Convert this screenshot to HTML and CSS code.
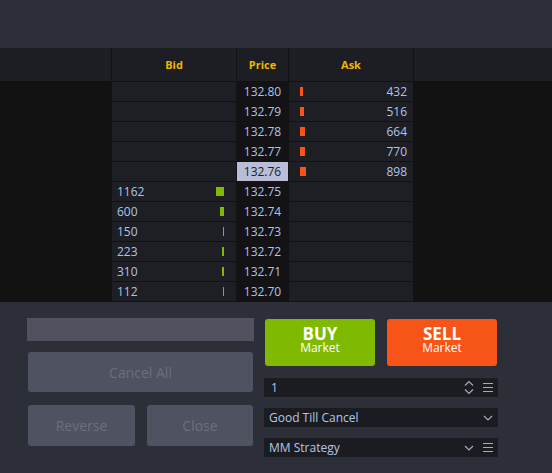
FILE: index.html
```html
<!DOCTYPE html>
<html>
<head>
<meta charset="utf-8">
<link rel="stylesheet" href="styles.css">
</head>
<body>
<div class="top"></div>
<div class="book">
  <div class="row head">
    <div class="side"></div>
    <div class="hcell">Bid</div>
    <div class="hcell">Price</div>
    <div class="hcell">Ask</div>
    <div class="side"></div>
  </div>
  <div class="row"><div class="side"></div><div class="bid"></div><div class="price">132.80</div><div class="ask"><span class="abar" style="width:3px"></span><span>432</span></div><div class="side"></div></div>
  <div class="row"><div class="side"></div><div class="bid"></div><div class="price">132.79</div><div class="ask"><span class="abar" style="width:4px"></span><span>516</span></div><div class="side"></div></div>
  <div class="row"><div class="side"></div><div class="bid"></div><div class="price">132.78</div><div class="ask"><span class="abar" style="width:5px"></span><span>664</span></div><div class="side"></div></div>
  <div class="row"><div class="side"></div><div class="bid"></div><div class="price">132.77</div><div class="ask"><span class="abar" style="width:5px"></span><span>770</span></div><div class="side"></div></div>
  <div class="row"><div class="side"></div><div class="bid"></div><div class="price last">132.76</div><div class="ask"><span class="abar" style="width:6px"></span><span>898</span></div><div class="side"></div></div>
  <div class="row"><div class="side"></div><div class="bid"><span>1162</span><span class="bbar" style="width:8px"></span></div><div class="price">132.75</div><div class="ask"></div><div class="side"></div></div>
  <div class="row"><div class="side"></div><div class="bid"><span>600</span><span class="bbar" style="width:4px"></span></div><div class="price">132.74</div><div class="ask"></div><div class="side"></div></div>
  <div class="row"><div class="side"></div><div class="bid"><span>150</span><span class="bbar" style="width:1px"></span></div><div class="price">132.73</div><div class="ask"></div><div class="side"></div></div>
  <div class="row"><div class="side"></div><div class="bid"><span>223</span><span class="bbar" style="width:2px"></span></div><div class="price">132.72</div><div class="ask"></div><div class="side"></div></div>
  <div class="row"><div class="side"></div><div class="bid"><span>310</span><span class="bbar" style="width:2px"></span></div><div class="price">132.71</div><div class="ask"></div><div class="side"></div></div>
  <div class="row"><div class="side"></div><div class="bid"><span>112</span><span class="bbar" style="width:1px"></span></div><div class="price">132.70</div><div class="ask"></div><div class="side"></div></div>
</div>
<div class="panel">
  <div class="left">
    <div class="field"></div>
    <div class="btn wide">Cancel All</div>
    <div class="pair">
      <div class="btn half">Reverse</div>
      <div class="btn half">Close</div>
    </div>
  </div>
  <div class="right">
    <div class="trade">
      <div class="tbtn buy"><span class="big">BUY</span><span class="small">Market</span></div>
      <div class="tbtn sell"><span class="big">SELL</span><span class="small">Market</span></div>
    </div>
    <div class="inp">
      <span class="val qty">1</span>
      <svg class="ic" width="10" height="15" viewBox="0 0 10 15"><path d="M1 5.5 L5 1.5 L9 5.5 M1 9.5 L5 13.5 L9 9.5" fill="none" stroke="#a3abc2" stroke-width="1.2"/></svg>
      <svg class="ic" width="10" height="11" viewBox="0 0 10 11"><path d="M0 1.5 H10 M0 5.5 H10 M0 9.5 H10" fill="none" stroke="#a3abc2" stroke-width="1.2"/></svg>
    </div>
    <div class="inp">
      <span class="val">Good Till Cancel</span>
      <svg class="ic" width="10" height="6" viewBox="0 0 10 6"><path d="M1 1 L5 5 L9 1" fill="none" stroke="#a3abc2" stroke-width="1.2"/></svg>
    </div>
    <div class="inp">
      <span class="val">MM Strategy</span>
      <svg class="ic" width="10" height="6" viewBox="0 0 10 6"><path d="M1 1 L5 5 L9 1" fill="none" stroke="#a3abc2" stroke-width="1.2"/></svg>
      <svg class="ic" width="10" height="11" viewBox="0 0 10 11"><path d="M0 1.5 H10 M0 5.5 H10 M0 9.5 H10" fill="none" stroke="#a3abc2" stroke-width="1.2"/></svg>
    </div>
  </div>
</div>
</body>
</html>
```
FILE: styles.css
```css
* { box-sizing: border-box; }
html, body {
  margin: 0;
  padding: 0;
  background: #2c2f38;
  font-family: "Open Sans", "DejaVu Sans", sans-serif;
  width: 552px;
  height: 473px;
  overflow: hidden;
}
.top { height: 48px; background: #2c2f38; }
.book {
  background: #121212;
  display: flex;
  flex-direction: column;
  row-gap: 1px;
  padding-bottom: 1px;
}
.row {
  display: grid;
  grid-template-columns: 111px 124px 51px 124px 1fr;
  column-gap: 1px;
  height: 19px;
  background: #121212;
}
.row.head { height: 33px; background: #111114; }
.head .side, .hcell { background: #1d1e23; }
.hcell {
  display: flex;
  align-items: center;
  justify-content: center;
  color: #f0b400;
  font-weight: bold;
  font-size: 11px;
}
.side { background: #121212; }
.bid, .ask, .price {
  font-size: 12px;
  color: #aec4ea;
  display: flex;
  align-items: center;
  line-height: 19px;
}
.bid {
  background: #1d1f24;
  justify-content: space-between;
  padding: 0 12px 0 5px;
}
.ask {
  background: #1d1f24;
  justify-content: space-between;
  padding: 0 6px 0 11px;
}
.price {
  background: #131315;
  justify-content: center;
}
.price.last { background: #b9bdd8; color: #1b1c26; }
.bbar, .abar { display: block; height: 9px; }
.bbar { background: #7fba00; }
.abar { background: #ff5219; }

.panel {
  display: flex;
  gap: 10px;
  padding: 16px 0 0 27px;
}
.left { width: 227px; display: flex; flex-direction: column; }
.field { height: 23px; background: #50535f; }
.btn {
  background: #4f5261;
  border-radius: 3px;
  color: #6b6f80;
  font-size: 14px;
  display: flex;
  align-items: center;
  justify-content: center;
}
.wide { height: 40px; margin: 11px 1px 0; }
.pair { display: flex; gap: 12px; margin: 13px 1px 0; }
.half { height: 41px; flex: 1; }
.half:first-child { flex: 0 0 107px; }
.right { width: 234px; display: flex; flex-direction: column; }
.trade { display: flex; gap: 12px; margin: 1px 1px 0 1px; }
.tbtn {
  flex: 0 0 110px;
  height: 47px;
  border-radius: 3px;
  color: #ffffff;
  display: flex;
  flex-direction: column;
  align-items: center;
  padding-top: 6px;
}
.buy { background: #7fba00; }
.sell { background: #f75518; }
.big { font-size: 17px; font-weight: bold; line-height: 17px; }
.small { font-size: 12px; line-height: 12px; }
.inp {
  height: 19px;
  background: #1b1c21;
  margin-top: 12px;
  display: flex;
  align-items: center;
  padding: 0 5px 0 5px;
  gap: 9px;
  color: #b4c6e8;
  font-size: 12px;
}
.inp + .inp { margin-top: 11px; }
.val { flex: 1; }
.val.qty { padding-left: 2px; }
.ic { display: block; flex: none; }
```
